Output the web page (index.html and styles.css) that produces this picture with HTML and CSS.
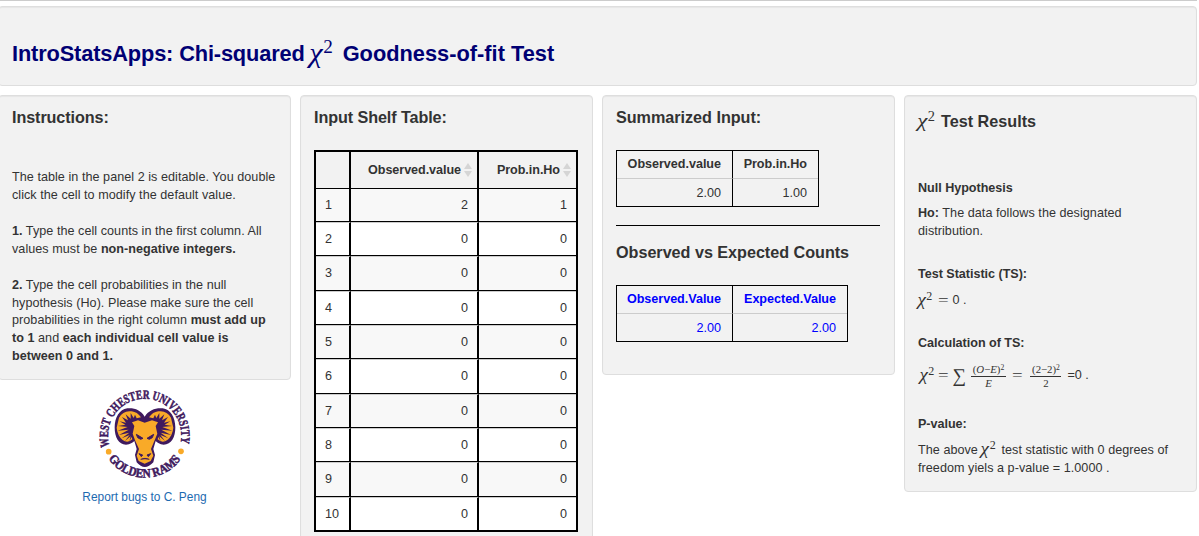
FILE: index.html
```html
<!DOCTYPE html>
<html lang="en">
<head>
<meta charset="utf-8">
<title>IntroStatsApps</title>
<link rel="stylesheet" href="styles.css">
</head>
<body>
<div class="page">
  <header class="well banner">
    <h1><span class="lead">IntroStatsApps: Chi-squared</span><span class="math"><i>χ</i><sup>2</sup></span><span>Goodness-of-fit Test</span></h1>
  </header>
  <main class="columns">
    <div class="col">
      <section class="well instructions">
        <h2>Instructions:</h2>
        <p>The table in the panel 2 is editable. You double<br>click the cell to modify the default value.</p>
        <p><b>1.</b> Type the cell counts in the first column. All<br>values must be <b>non-negative integers.</b></p>
        <p><b>2.</b> Type the cell probabilities in the null<br>hypothesis (Ho). Please make sure the cell<br>probabilities in the right column <b>must add up<br>to 1</b> and <b>each individual cell value is<br>between 0 and 1.</b></p>
      </section>
      <div class="credit">
        <svg class="logo" viewBox="24 24 306 306">
          <defs>
            <path id="top" d="M71 214A110 110 0 1 1 281 214"/>
            <path id="bottom" d="M66 249A132 132 0 0 0 286 249"/>
          </defs>
          <g class="seal">
            <text><textPath href="#top" textLength="402" lengthAdjust="spacingAndGlyphs">WEST CHESTER UNIVERSITY</textPath></text>
            <text><textPath href="#bottom" startOffset="2" textLength="254" lengthAdjust="spacingAndGlyphs">GOLDEN RAMS</textPath></text>
          </g>
          <circle class="gold" cx="68" cy="230" r="8.5"/>
          <circle class="gold" cx="285" cy="229" r="8.5"/>
          <path class="purple" d="M176 125C164 105 145 98 124 100C100 103 86 128 86 157C86 188 98 208 120 209C133 208 140 203 145 198L152 222L147 240L152 262Q176 290 202 262L207 240L202 222L209 198C214 203 221 208 233 209C256 208 268 188 268 157C268 128 254 103 230 100C209 98 189 105 176 125Z"/>
          <path class="gold" d="M138 142L156 136L176 143L198 136L216 142L209 153L214 176L205 198L195 222L202 242L194 258L176 266L158 258L152 242L159 222L148 198L140 176L145 153Z"/>
          <path class="gold" d="M99 128Q112 105 137 109Q154 111 165 127L152 130L147 119L143 129L134 114L134 131L119 118L126 136L108 126L120 143L101 139L118 149L96 153L125 156L95 167L128 164L99 180L130 173L107 190L131 180L117 198L134 184L130 199L137 186L139 193Q125 206 110 195Q94 181 92 158Z"/>
          <path class="gold" d="M255 128Q242 105 217 109Q200 111 189 127L202 130L207 119L211 129L220 114L220 131L235 118L228 136L246 126L234 143L253 139L236 149L258 153L229 156L259 167L226 164L255 180L224 173L247 190L223 180L237 198L220 184L224 199L217 186L215 193Q229 206 244 195Q260 181 262 158Z"/>
          <path class="ink" d="M151 178L171 190L164 193L155 188ZM203 178L183 190L190 193L199 188ZM159 236L170 240L166 245ZM194 236L183 240L187 245ZM164 253Q177 247 190 253"/>
        </svg>
        <a>Report bugs to C. Peng</a>
      </div>
    </div>

    <section class="well shelf">
      <h2>Input Shelf Table:</h2>
      <table class="shelf-table">
        <colgroup><col class="c1"><col class="c2"><col class="c3"></colgroup>
        <tr><th></th><th><span>Observed.value<i class="sort"></i></span></th><th><span>Prob.in.Ho<i class="sort"></i></span></th></tr>
        <tr><td>1</td><td>2</td><td>1</td></tr>
        <tr><td>2</td><td>0</td><td>0</td></tr>
        <tr><td>3</td><td>0</td><td>0</td></tr>
        <tr><td>4</td><td>0</td><td>0</td></tr>
        <tr><td>5</td><td>0</td><td>0</td></tr>
        <tr><td>6</td><td>0</td><td>0</td></tr>
        <tr><td>7</td><td>0</td><td>0</td></tr>
        <tr><td>8</td><td>0</td><td>0</td></tr>
        <tr><td>9</td><td>0</td><td>0</td></tr>
        <tr><td>10</td><td>0</td><td>0</td></tr>
      </table>
    </section>

    <section class="well summary">
      <h2>Summarized Input:</h2>
      <table class="mini">
        <colgroup><col class="m1"><col class="m2"></colgroup>
        <tr><th>Observed.value</th><th>Prob.in.Ho</th></tr>
        <tr><td>2.00</td><td>1.00</td></tr>
      </table>
      <hr>
      <h2>Observed vs Expected Counts</h2>
      <table class="mini blue">
        <colgroup><col class="m1"><col class="m3"></colgroup>
        <tr><th>Observed.Value</th><th>Expected.Value</th></tr>
        <tr><td>2.00</td><td>2.00</td></tr>
      </table>
    </section>

    <section class="well results">
      <h2><span class="math"><i>χ</i><sup>2</sup></span>Test Results</h2>
      <h3>Null Hypothesis</h3>
      <p class="ho"><b>Ho:</b> The data follows the designated<br>distribution.</p>
      <h3>Test Statistic (TS):</h3>
      <div class="eq stat"><span class="math chi"><i>χ</i><sup>2</sup></span><span class="math equals">=</span><span>0 .</span></div>
      <h3>Calculation of TS:</h3>
      <div class="eq calc">
        <span class="math chi"><i>χ</i><sup>2</sup></span><span class="math equals">=</span><span class="math sum">∑</span>
        <span class="math frac f1"><span>(<i>O</i>−<i>E</i>)<sup>2</sup></span><span><i>E</i></span></span>
        <span class="math equals second">=</span>
        <span class="math frac f2"><span>(2−2)<sup>2</sup></span><span>2</span></span>
        <span>=0 .</span>
      </div>
      <h3>P-value:</h3>
      <p class="pval">The above <span class="math"><i>χ</i><sup>2</sup></span>test statistic with 0 degrees of<br>freedom yiels a p-value = 1.0000 .</p>
    </section>
  </main>
</div>
</body>
</html>
```
FILE: styles.css
```css
* { box-sizing: border-box; }
body {
  margin: 0;
  height: 536px;
  overflow: hidden;
  background: #fff;
  color: #333;
  font: 12.6px/17.9px "Liberation Sans", Arial, sans-serif;
}
.page { border-top: 1px solid #ccc; padding-top: 5px; margin-left: -2px; width: 1199px; }
h1, h2, h3, p { margin: 0; }
h2 { font-size: 16.2px; line-height: 18px; }
h3 { font-size: 12.6px; line-height: 18px; letter-spacing: -.03px; }
b { letter-spacing: .02px; }
.well {
  background: #f2f2f2;
  border: 1px solid #dedede;
  border-radius: 4px;
  box-shadow: inset 0 1px 1px rgba(0, 0, 0, .05);
  padding: 0 13px;
}
.banner { height: 80px; padding-top: 34px; }
h1 { display: flex; color: #000074; font-size: 21.8px; line-height: 26px; height: 26px; white-space: nowrap; }
h1 .lead { letter-spacing: -.15px; }
.columns { display: grid; grid-template-columns: repeat(4, 293px); gap: 9px; margin-top: 9px; align-items: start; }
.columns .well { padding-top: 12px; }
.instructions { height: 285px; }
.instructions h2 { margin-bottom: 43px; letter-spacing: -.1px; }
.instructions p { margin-bottom: 18px; white-space: nowrap; letter-spacing: .045px; }
.credit { display: flex; flex-direction: column; align-items: center; padding-top: 3px; }
.credit a { color: #1c6ab0; margin-top: 4px; font-size: 11.9px; }
.logo { width: 102px; height: 102px; }
.seal { font: bold 38px "Liberation Serif", serif; fill: #3f1a5e; stroke: #3f1a5e; stroke-width: 1.6; }
.gold { fill: #f9aa28; }
.purple { fill: #3f1a5e; }
.ink { fill: #3f1a5e; stroke: #3f1a5e; stroke-width: 3; }

.math { font-family: "Liberation Serif", "Times New Roman", serif; font-weight: normal; letter-spacing: 0; }
.math sup { font-size: .8em; line-height: 0; vertical-align: .45em; }
.frac sup { font-size: .71em; }
.math > i { display: inline-block; font-size: 1.1em; line-height: 0; transform: scaleX(1.15); }
h1 .math { width: 31px; margin: 0 2px 0 5px; font-size: 24px; }
h1 .math sup { margin-left: 2px; }

.shelf { height: 460px; }
.shelf h2, .summary h2 { margin-bottom: 24px; }
.summary h2 { letter-spacing: -.03px; }
.shelf h2 { letter-spacing: -.1px; }
table { border-collapse: separate; border-spacing: 0; table-layout: fixed; }
th, td { padding: 1px 0 0; text-align: right; }
.shelf-table { width: 264px; border: 2px solid #000; border-bottom: 0; }
.c1 { width: 35px; } .c2 { width: 128px; } .c3 { width: 97px; }
.shelf-table tr { height: 34px; background: #fff; }
.shelf-table tr:nth-child(even) { background: #f8f8f8; }
.shelf-table tr:nth-child(1) { height: 37px; background: transparent; }
.shelf-table tr:nth-child(2) { height: 33px; }
.shelf-table tr:nth-child(3n+4) { height: 35px; }
.shelf-table tr:last-child { height: 35px; }
.shelf-table tr:nth-child(odd):not(:first-child) { background: #fff; }
.shelf-table th, .shelf-table td { border-bottom: 1px solid #000; border-right: 2px solid #000; padding-right: 9px; }
.shelf-table td:last-child, .shelf-table th:last-child { border-right: 0; }
.shelf-table th { padding-right: 5px; letter-spacing: -.06px; }
.shelf-table tr:nth-child(n+3) td { border-top: 1px solid #ccc; }
.shelf-table tr:last-child td { border-bottom-width: 2px; }
.shelf-table td:first-child { text-align: left; padding-left: 9px; padding-right: 0; }
.shelf-table th span { display: flex; justify-content: flex-end; align-items: center; gap: 3px; }
.sort { display: flex; flex-direction: column; gap: 2px; position: relative; top: -1px; }
.sort::before, .sort::after { content: ""; border: 4px solid transparent; }
.sort::before { border-top: 0; border-bottom: 6px solid #d5d5d5; }
.sort::after { border-bottom: 0; border-top: 6px solid #d5d5d5; }

.summary { height: 280px; }
.mini { border: 1px solid #000; width: 203px; }
.m1 { width: 116px; } .m2 { width: 85px; } .m3 { width: 114px; }
.mini tr { height: 27px; }
.mini tr:first-child { height: 28px; }
.mini th, .mini td { padding-right: 11px; white-space: nowrap; letter-spacing: -.03px; }
.mini td { padding-top: 2px; }
.mini th:first-child, .mini td:first-child { border-right: 1px solid #000; }
.mini th, .mini th:first-child { border-bottom: 1px solid #ccc; }
.mini.blue { width: 232px; color: #00f; }
.summary hr { border: 0; border-top: 1px solid #000; margin: 18px 1px 17px 0; }

.results { height: 397px; }
.results h2 { height: 18px; margin: 4px 0 49px 0; }
.results h2 .math { display: inline-block; width: 23px; font-size: 18px; line-height: 0; }
.results h2 .math > i { margin-right: 1px; }
.results p { white-space: nowrap; letter-spacing: .045px; }
.results .ho { margin: 8px 0 24px; height: 36px; }
.eq { display: flex; align-items: center; height: 18px; white-space: nowrap; }
.eq .math { font-size: 15px; }
.eq .chi { width: 14px; }
.eq .chi sup { margin-left: 1px; }
.equals { margin: 0 5px 0 7px; transform: scaleX(1.25); }
.stat { margin-top: 9px; margin-bottom: 24px; }
.calc { margin: 15px 0 30px; padding-left: 2px; }
.calc .chi { width: 12px; }
.eq .sum { font-size: 19px; margin-right: 5px; }
.eq .frac { display: flex; flex-direction: column; align-items: center; font-size: 10.8px; line-height: 13px; }
.frac > span:first-child { border-bottom: 1px solid #333; width: 100%; text-align: center; }
.eq .second { margin-right: 9px; }
.f1 { width: 35px; } .f2 { width: 31px; margin-right: 6px; }
.results .pval { margin-top: 9px; }
.pval .math { display: inline-block; width: 20px; font-size: 15px; line-height: 0; }
.pval .math > i { margin-right: 1px; }
```
